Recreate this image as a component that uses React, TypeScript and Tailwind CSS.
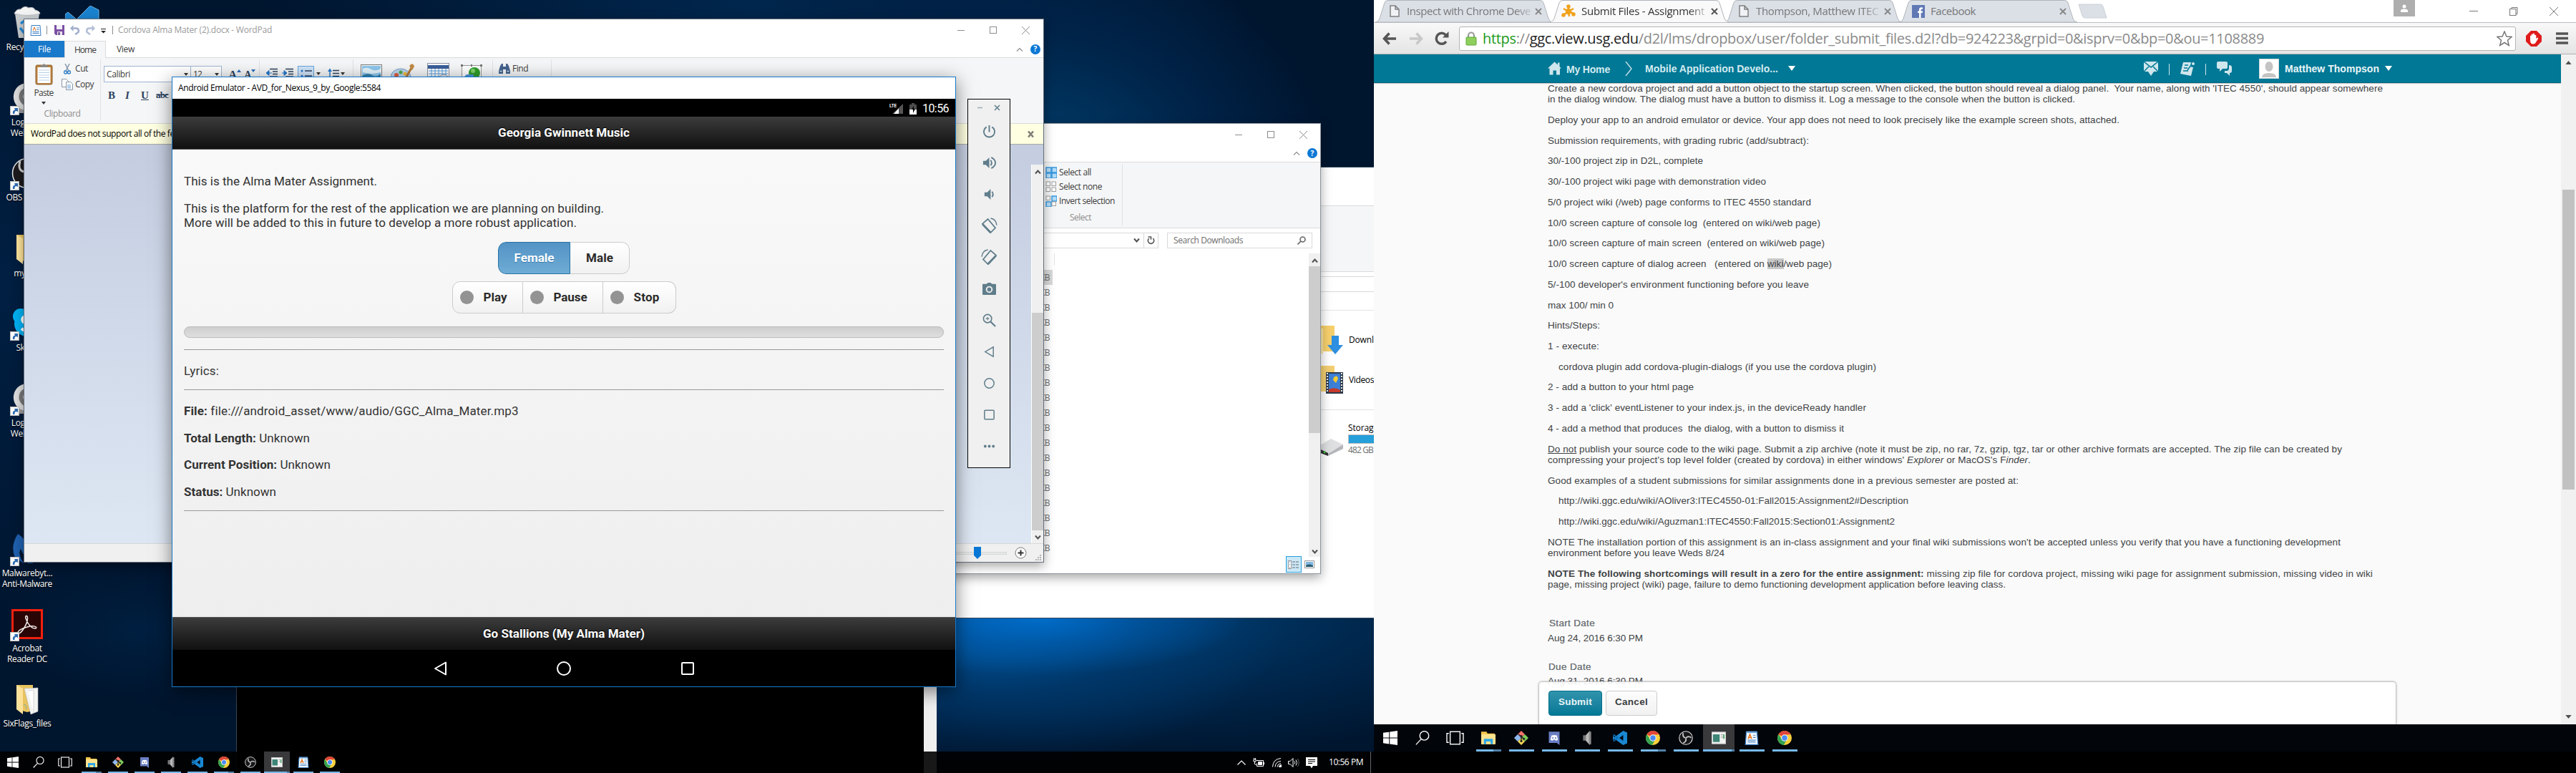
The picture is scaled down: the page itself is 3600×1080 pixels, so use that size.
import React, { useLayoutEffect, useRef, useState } from "react";

/* Text run whose tracking is adjusted so that it spans `w` pixels. */
function T({ w, className = "", children }: { w?: number; className?: string; children: React.ReactNode }) {
  const ref = useRef<HTMLSpanElement>(null);
  const [ls, setLs] = useState<number | undefined>(undefined);
  useLayoutEffect(() => {
    const el = ref.current;
    if (!el || !w) return;
    const natural = el.getBoundingClientRect().width;
    const n = (el.textContent || "").length;
    if (n > 0) setLs((w - natural) / n);
  }, [w]);
  return (
    <span ref={ref} className={`inline-block shrink-0 whitespace-pre ${className}`} style={ls === undefined ? undefined : { letterSpacing: `${ls}px` }}>
      {children}
    </span>
  );
}

/* ---------- Icons ---------- */
type P = { className?: string };

const Win = ({ className = "" }: P) => (
  <svg viewBox="0 0 16 16" className={className} fill="#fff">
    <path d="M0 2.2 6.6 1.3V7.6H0zM7.4 1.2 16 0V7.6H7.4zM0 8.4H6.6V14.7L0 13.8zM7.4 8.4H16V16L7.4 14.8z" />
  </svg>
);
const Search = ({ className = "" }: P) => (
  <svg viewBox="0 0 16 16" className={className} fill="none" stroke="#fff" strokeWidth="1.1">
    <circle cx="10" cy="5.5" r="5" />
    <path d="M6.5 9.3 0.7 15.5" />
  </svg>
);
const TaskView = ({ className = "" }: P) => (
  <svg viewBox="0 0 20 16" className={className} fill="none" stroke="#fff" strokeWidth="1.1">
    <rect x="4.5" y="1" width="11" height="14" />
    <path d="M3 3H.8v10H3M17 3h2.2v10H17" />
  </svg>
);
const FolderIc = ({ className = "" }: P) => (
  <svg viewBox="0 0 16 16" className={className}>
    <path d="M0 1h6l1 2h8v12H0z" fill="#f6c64d" />
    <path d="M0 4h16v11H0z" fill="#fde38e" />
    <path d="M3 9h10v6h-2.5v-3h-5v3H3z" fill="#2ea7e8" />
  </svg>
);
const GitIc = ({ className = "" }: P) => (
  <svg viewBox="0 0 16 16" className={className}>
    <path d="M8 0l4 4-4 4-4-4z" fill="#f2746b" />
    <path d="M4 4l4 4-4 4-4-4z" fill="#8fb8ef" />
    <path d="M12 4l4 4-4 4-4-4z" fill="#7fcf5a" />
    <path d="M8 8l4 4-4 4-4-4z" fill="#f5d857" />
    <path d="M5 4l6 5M8 5v7" stroke="#222" strokeWidth="1.1" />
    <circle cx="8" cy="6" r="1.3" fill="#222" /><circle cx="8" cy="11.5" r="1.3" fill="#222" /><circle cx="11" cy="9" r="1.2" fill="#222" />
  </svg>
);
const DiscordIc = ({ className = "" }: P) => (
  <svg viewBox="0 0 16 16" className={className}>
    <path d="M2 1h12v15l-3-2.5H2z" fill="#6a7fc4" />
    <path d="M5 5.2Q8 4.2 11 5.2L12.2 9.8Q11 11 9.8 11L9 10H7l-.8 1Q5 11 3.8 9.8z" fill="#fff" />
    <circle cx="6.4" cy="8" r=".9" fill="#6a7fc4" /><circle cx="9.6" cy="8" r=".9" fill="#6a7fc4" />
  </svg>
);
const SpeakerIc = ({ className = "" }: P) => (
  <svg viewBox="0 0 16 16" className={className}>
    <path d="M3.5 5h3v6h-3z" fill="#777" />
    <path d="M6.5 5 11 0v16L6.5 11z" fill="#b9b9b9" />
    <path d="M10 1h2.5v14H10z" fill="#8b8b8b" />
  </svg>
);
const VsIc = ({ className = "" }: P) => (
  <svg viewBox="0 0 16 16" className={className}>
    <path d="M11.5 0 16 2v12l-4.500 2L1.500 8.700 0 11V5l1.500 2.300z" fill="#1a87d2" />
    <path d="M0 4.500 1.500 4 11.500 12V4L1.500 12 0 11.500 4 8z" fill="#0d6fb8" />
    <path d="M7.500 8 11.500 5v6z" fill="#02060c" />
  </svg>
);
const ChromeIc = ({ className = "", blue = "#4a8af4" }: P & { blue?: string }) => (
  <svg viewBox="0 0 16 16" className={className}>
    <circle cx="8" cy="8" r="8" fill="#f7cf3c" />
    <path d="M8 8 1.100 4A8 8 0 0 1 14.900 4L8 4.500z" fill="#e0453a" />
    <path d="M1.100 4A8 8 0 0 0 7 15.940L10.500 10 5 9.500z" fill="#35a352" />
    <circle cx="8" cy="8" r="3.800" fill="#fff" /><circle cx="8" cy="8" r="3" fill={blue} />
  </svg>
);
const ObsIc = ({ className = "" }: P) => (
  <svg viewBox="0 0 16 16" className={className}>
    <circle cx="8" cy="8" r="7.400" fill="#17171a" stroke="#ddd" strokeWidth=".9" />
    <path d="M7.500 8Q4 7 5 2.500M8 8q3-3 6-.2M8 8.200q1 4-3 5.500" stroke="#c9c9c9" strokeWidth="1.400" fill="none" />
  </svg>
);
const EmuIc = ({ className = "" }: P) => (
  <svg viewBox="0 0 16 16" className={className}>
    <rect x=".4" y="1.500" width="15.200" height="13" fill="#f2f2f2" stroke="#cfcfcf" strokeWidth=".8" />
    <rect x="1.500" y="4" width="7.500" height="8.500" fill="#3d8577" />
    <path d="M10.500 4.500h2M10.500 7h2" stroke="#999" /><rect x="13" y="4" width="1.300" height="5" fill="#3c9b5a" />
  </svg>
);
const WordPadIc = ({ className = "" }: P) => (
  <svg viewBox="0 0 16 16" className={className}>
    <path d="M2 1.500h12l1 14H1z" fill="#f5faff" stroke="#3d7fc4" strokeWidth="1" />
    <path d="M2 .5h12v2H2z" fill="#69a3dc" />
    <path d="M4 9l2-5 2 5M4.700 7.500h2.600" stroke="#e8731a" strokeWidth="1.200" fill="none" />
    <path d="M9.500 5h3M9.500 7.500h3M3.500 10.500h9M3.500 12.500h9" stroke="#4b86c6" strokeWidth=".9" />
  </svg>
);

function Taskbar({ big }: { big?: boolean }) {
  const ic = big ? "w-5 h-5" : "w-4 h-4";
  const items = [FolderIc, GitIc, DiscordIc, SpeakerIc, VsIc, ChromeIc, ObsIc, EmuIc, WordPadIc, ChromeIc];
  return (
    <div className={`flex h-full ${big ? "w-[597px]" : "w-[480px]"}`}>
      <div className={`flex items-center justify-center ${big ? "w-[45px]" : "w-[36px]"}`}><Win className={ic} /></div>
      <div className={`flex items-center justify-center ${big ? "w-[45px]" : "w-[36px]"}`}><Search className={ic} /></div>
      <div className={`flex items-center justify-center ${big ? "w-[47px]" : "w-[37px]"}`}><TaskView className={big ? "w-[25px] h-5" : "w-5 h-4"} /></div>
      {items.map((Ic, i) => (
        <div key={i} className={`flex flex-col items-center ${big ? "w-[46px]" : "w-[37px]"}`}>
          <div className={`flex flex-1 items-center justify-center pt-[2px] ${i === 7 ? (big ? "w-[44px] bg-[#39393c]" : "w-[36px] bg-[#39393c]") : ""}`}>
            <Ic className={ic} />
          </div>
          <div className={`flex justify-end bg-[#76b9ed] ${big ? "h-[3px]" : "h-[2px]"} ${i === 7 ? (big ? "w-[44px]" : "w-[36px]") : big ? "w-[35px]" : "w-[28px]"}`}>
            {(i === 0 || i === 5 || i === 7) && <div className={`h-full bg-[#4f81a8] ${i === 7 ? "w-[4px]" : big ? "w-[11px]" : "w-[8px]"}`} />}
          </div>
        </div>
      ))}
    </div>
  );
}

const Shortcut = () => (
  <svg viewBox="0 0 13 13" className="absolute bottom-0 left-0 h-[13px] w-[13px]">
    <rect x=".5" y=".5" width="12" height="12" fill="#fff" stroke="#bbb" />
    <path d="M4 11Q3 6 7 5.500L6 3h5v5L9 7Q6 7 6.500 11z" fill="#2f6cb3" />
  </svg>
);

function DeskIcon({ className, lines, children, shortcut = true }: { className: string; lines: string[]; children: React.ReactNode; shortcut?: boolean }) {
  return (
    <div className={`absolute flex w-[76px] flex-col items-center font-['Open_Sans',sans-serif] text-[12px] leading-[15px] tracking-[-0.35px] text-white ${className}`}>
      <div className="relative mb-[2px] flex h-[48px] w-[48px] items-center justify-center">
        {children}
        {shortcut && <Shortcut />}
      </div>
      {lines.map((l) => <div key={l} className="whitespace-nowrap [text-shadow:0_1px_2px_#000]">{l}</div>)}
    </div>
  );
}

const Cam = () => (
  <svg viewBox="0 0 44 48" className="h-[46px] w-[44px]">
    <path d="M12 36h22l4 10H6z" fill="#999" /><circle cx="22" cy="22" r="20" fill="#dcdcdc" /><circle cx="24" cy="22" r="14" fill="#777" /><circle cx="25" cy="22" r="9" fill="#eee" /><circle cx="26" cy="22" r="7" fill="#1d5750" />
  </svg>
);

const FolderBig = () => (
  <svg viewBox="0 0 34 44" className="h-[44px] w-[34px]">
    <path d="M2 2h23v36l-8 2L2 36z" fill="#e8c25e" />
    <path d="M13 7 32 6v33l-10 4z" fill="#f3f3f1" stroke="#bbb" strokeWidth=".6" /><path d="M18 10l8-1v32" fill="#fff" stroke="#ccc" strokeWidth=".8" />
    <path d="M2 2 11 7v36L2 36z" fill="#fbe19a" />
    <path d="M12 30q4-2 4 6" stroke="#7aa" fill="none" />
  </svg>
);

/* Minimise / maximise / close glyphs */
const WinButtons = ({ className = "" }: P) => (
  <svg viewBox="0 0 104 14" className={`h-[14px] w-[104px] ${className}`} fill="none" stroke="#8c8c8c">
    <path d="M1 7.500h10M91 2l11 11M102 2 91 13" /><rect x="46.500" y="2.500" width="9" height="9" />
  </svg>
);
const HelpRow = ({ className = "" }: P) => (
  <div className={`flex items-center justify-end gap-[10px] ${className}`}>
    <svg viewBox="0 0 10 6" className="h-[6px] w-[10px]" fill="none" stroke="#8c8c8c" strokeWidth="1.200"><path d="M1 5.500 5 1.500l4 4" /></svg>
    <div className="flex h-[14px] w-[14px] items-center justify-center rounded-full bg-[#0a78d6] font-['Open_Sans',sans-serif] text-[10px] font-bold text-white">?</div>
  </div>
);
const Chev = ({ d, className = "" }: { d: string; className?: string }) => (
  <svg viewBox="0 0 9 8" className={`h-[8px] w-[9px] ${className}`} fill="none" stroke="#505050" strokeWidth="2"><path d={d} /></svg>
);
const UP = "M1 6.500 4.500 2.500 8 6.500";
const DOWN = "M1 1.500 4.500 5.500 8 1.500";

/* ---------- WordPad ---------- */
function WordPad() {
  return (
    <div className="absolute left-[33px] top-[26px] flex h-[760px] w-[1426px] flex-col border border-[#66707c] bg-white font-['Open_Sans',sans-serif] text-[12px] text-[#3c3c3c] shadow-[0_5px_14px_rgba(0,0,0,0.35)]">
      <div className="flex h-[30px] items-center">
        <svg viewBox="0 0 16 16" className="ml-[8px] h-[16px] w-[16px]">
          <path d="M2 1.500h12l1 14H1z" fill="#f5faff" stroke="#3d7fc4" /><path d="M4 9l2-5 2 5" stroke="#e8731a" fill="none" /><path d="M9.500 5h3M9.500 7.500h3M3.500 10.500h9M3.500 12.500h9" stroke="#4b86c6" />
        </svg>
        <div className="ml-[7px] h-[12px] w-px bg-[#8c8c8c]" />
        <svg viewBox="0 0 14 14" className="ml-[10px] h-[14px] w-[14px]"><path d="M0 0h14v14H2l-2-2z" fill="#7b4fa3" /><path d="M3 0h8v6H3z" fill="#f3eefa" /><path d="M4 9h7v5H4z" fill="#e6dff0" /><path d="M5.500 10h2v4h-2z" fill="#4b2c6c" /></svg>
        <svg viewBox="0 0 14 14" className="ml-[8px] h-[14px] w-[14px]" fill="none" stroke="#a3b0cc" strokeWidth="2.600"><path d="M3 4.500h5.500a3.500 3.500 0 0 1 1 6.800L7 13" /><path d="M0 4.500 4.500 0v9z" fill="#a3b0cc" stroke="none" /></svg>
        <svg viewBox="0 0 14 14" className="ml-[7px] h-[14px] w-[14px]" fill="none" stroke="#b4bfd6" strokeWidth="2.600"><path d="M11 4.500H5.500a3.500 3.500 0 0 0-1 6.800L7 13" /><path d="M14 4.500 9.500 0v9z" fill="#b4bfd6" stroke="none" /></svg>
        <svg viewBox="0 0 7 7" className="ml-[8px] mt-[3px] h-[7px] w-[7px]"><path d="M0 .5h7" stroke="#222" /><path d="M0 3h7L3.500 6.500z" fill="#222" /></svg>
        <div className="ml-[9px] h-[12px] w-px bg-[#8c8c8c]" />
        <T w={215} className="ml-[7px] text-[#9a9a9a]">Cordova Alma Mater (2).docx - WordPad</T>
        <WinButtons className="ml-auto mr-[17px]" />
      </div>
      <div className="flex h-[24px] items-stretch border-b border-[#dadbdc]">
        <div className="flex w-[56px] items-center justify-center bg-[#1979ca] text-white"><T w={18}>File</T></div>
        <div className="mb-[-1px] flex w-[58px] items-center justify-center border-x border-t border-[#dadbdc] bg-[#f5f6f7]"><T w={30}>Home</T></div>
        <div className="ml-[15px] flex items-center"><T w={25}>View</T></div>
        <HelpRow className="ml-auto mr-[4px]" />
      </div>
      <div className="flex h-[92px] border-b border-[#dadbdc] bg-[#f5f6f7] pt-[2px]">
        <div className="flex h-[86px] w-[107px] flex-col border-r border-[#e1e2e4]">
          <div className="flex h-[68px]">
            <div className="ml-[13px] flex w-[28px] flex-col items-center pt-[5px]">
              <svg viewBox="0 0 25 31" className="h-[31px] w-[25px]"><rect x="1" y="3" width="23" height="27" rx="2" fill="#b98140" stroke="#8f6130" /><rect x="3.500" y="6" width="18" height="22" fill="#fff" /><path d="M5 10h15M5 13.500h15M5 17h15M5 20.500h15M5 24h15" stroke="#b9cfe6" /><path d="M7 6 8 3h3q1.500-4 3 0h3l1 3z" fill="#888" /></svg>
              <T w={27} className="leading-[21px]">Paste</T>
              <svg viewBox="0 0 6 4" className="mt-[2px] h-[4px] w-[6px]"><path d="M0 0h6L3 4z" fill="#333" /></svg>
            </div>
            <div className="ml-[11px] flex flex-col">
              <div className="flex h-[22px] items-center pt-[4px]">
                <svg viewBox="0 0 10 15" className="ml-[3px] mr-[6px] h-[15px] w-[10px]" fill="none"><path d="M2 0l5 10M8 0 3 10" stroke="#8a98ab" strokeWidth="1.500" /><circle cx="2.500" cy="12" r="2" stroke="#2a7cc7" strokeWidth="1.400" /><circle cx="7.500" cy="12" r="2" stroke="#2a7cc7" strokeWidth="1.400" /></svg>
                <T w={18}>Cut</T>
              </div>
              <div className="flex h-[22px] items-center pt-[4px]">
                <svg viewBox="0 0 16 16" className="mr-[3px] h-[16px] w-[16px]" fill="#fff" stroke="#8795a6"><path d="M.5.500h6l3 3v8h-9z" /><path d="M6.500 4.500h6l3 3v8h-9z" /><path d="M8 9h5M8 11h5M8 13h5" stroke="#6ea3d8" /></svg>
                <T w={26}>Copy</T>
              </div>
            </div>
          </div>
          <div className="flex justify-center text-[#8d8d8d]"><T w={51} className="leading-[20px]">Clipboard</T></div>
        </div>
        <div className="flex h-[86px] w-[222px] flex-col border-r border-[#e1e2e4] pl-[4px] pt-[9px]">
          <div className="flex">
            <div className="flex h-[23px] w-[122px] items-center justify-between border border-[#9fb5d3] bg-white px-[3px]"><T w={33}>Calibri</T><svg viewBox="0 0 6 4" className="h-[4px] w-[6px]"><path d="M0 0h6L3 4z" fill="#333" /></svg></div>
            <div className="flex h-[23px] w-[43px] items-center justify-between border border-l-0 border-[#9fb5d3] bg-white px-[3px]"><T w={12}>12</T><svg viewBox="0 0 6 4" className="h-[4px] w-[6px]"><path d="M0 0h6L3 4z" fill="#333" /></svg></div>
            <div className="ml-[9px] flex items-end font-['Liberation_Serif',serif] text-[17px] font-bold leading-[20px] text-[#2d4361]">A<span className="mb-[14px] h-0 w-0 border-x-[3px] border-b-[4px] border-x-transparent border-b-[#2a6fc0]" /></div>
            <div className="ml-[4px] flex items-end font-['Liberation_Serif',serif] text-[14px] font-bold leading-[20px] text-[#2d4361]">A<span className="mb-[14px] h-0 w-0 border-x-[3px] border-t-[4px] border-x-transparent border-t-[#2a6fc0]" /></div>
          </div>
          <div className="mt-[6px] flex h-[24px] items-center pl-[6px] font-['Liberation_Serif',serif] text-[15px] font-bold text-[#2d4361]">
            <span className="w-[24px]">B</span><span className="w-[22px] italic">I</span><span className="w-[21px] underline">U</span><T w={17} className="text-[13px] line-through">abc</T>
          </div>
        </div>
        <div className="flex h-[86px] w-[131px] items-start gap-[6px] border-r border-[#e1e2e4] pl-[9px] pt-[9px]">
          {[0, 1].map((i) => (
            <svg key={i} viewBox="0 0 16 16" className="mt-[3px] h-[16px] w-[16px]" stroke="#2d4361" strokeWidth="1.500"><path d="M5 1.500h11M9 5h7M9 8.500h7M5 12h11" /><path d={i ? "M7 7 3 3.500v7zM0 7h5" : "M0 7l4-3.500v7zM3 7h5"} fill="#2378cc" stroke="#2378cc" strokeWidth="1" /></svg>
          ))}
          <div className="flex h-[24px] w-[23px] shrink-0 justify-center border border-[#6aa7e0] bg-[#cfe4f8] pt-[4px]"><svg viewBox="0 0 16 12" className="h-[12px] w-[16px]"><path d="M6 2h10M6 9h10" stroke="#2d4361" strokeWidth="1.500" /><circle cx="2" cy="2" r="1.500" fill="#2378cc" /><circle cx="2" cy="9" r="1.500" fill="#2378cc" /></svg></div>
          <svg viewBox="0 0 6 4" className="ml-[-3px] mt-[9px] h-[4px] w-[6px] shrink-0"><path d="M0 0h6L3 4z" fill="#333" /></svg>
          <svg viewBox="0 0 16 14" className="ml-[4px] mt-[3px] h-[14px] w-[16px] shrink-0"><path d="M7 3.500h9M7 7.500h9M7 11.500h9" stroke="#2d4361" strokeWidth="1.500" /><path d="M3 2v12" stroke="#2378cc" strokeWidth="1.500" /><path d="M0 5l3-4.500L6 5z" fill="#2378cc" /></svg>
          <svg viewBox="0 0 6 4" className="ml-[-4px] mt-[9px] h-[4px] w-[6px] shrink-0"><path d="M0 0h6L3 4z" fill="#333" /></svg>
        </div>
        <div className="flex h-[86px] w-[195px] items-start border-r border-[#e1e2e4] pl-[10px] pt-[7px]">
          <svg viewBox="0 0 30 26" className="h-[26px] w-[30px] shrink-0"><rect x=".5" y=".5" width="29" height="25" fill="#fff" stroke="#777" /><rect x="2" y="2" width="26" height="22" fill="#8fc7ee" /><path d="M2 16q8-5 14-1t12-2v11H2z" fill="#2e7fa8" /><path d="M3 6q6-3 12 1 6 3 13-1v5q-12 4-25 0z" fill="#e3f3fc" /></svg>
          <svg viewBox="0 0 34 30" className="ml-[12px] mt-[-2px] h-[30px] w-[34px] shrink-0"><ellipse cx="14" cy="20" rx="14" ry="12" fill="#b9d7f0" stroke="#7a9cc0" /><circle cx="8" cy="17" r="3" fill="#e35d3f" /><circle cx="14" cy="13" r="2.500" fill="#4fa84d" /><circle cx="20" cy="15" r="2.500" fill="#f3b83a" /><path d="M30 5 20 23" stroke="#b57a38" strokeWidth="3" /><path d="M26 4q5-6 7 1l-3 5z" fill="#c28b48" /></svg>
          <svg viewBox="0 0 31 26" className="ml-[17px] mt-[-2px] h-[26px] w-[31px] shrink-0"><rect x=".5" y=".5" width="30" height="26" fill="#fff" stroke="#8a94a5" /><path d="M1 3h29v5H1z" fill="#3b5f9a" /><path d="M2 11h27M2 15h27M2 19h27M2 23h27M6 8v18M11 8v18M16 8v18M21 8v18M26 8v18" stroke="#5a9fe0" /><circle cx="23" cy="23" r="7" fill="#dfe6ee" stroke="#8a94a5" /></svg>
          <svg viewBox="0 0 30 26" className="ml-[16px] h-[26px] w-[30px] shrink-0"><rect x="1.500" y="1.500" width="27" height="27" fill="#fff" stroke="#999" /><circle cx="19" cy="12" r="8" fill="#2f9e2b" /><circle cx="17" cy="9" r="3" fill="#7ed36c" /><path d="M4 18l4-4h10v14H4z" fill="#4c95dd" /><path d="M0 0h3v3H0zM27 0h3v3h-3zM14 0h2v3h-2z" fill="#777" /></svg>
        </div>
        <div className="flex h-[86px] w-[82px] items-start border-r border-[#e1e2e4] pl-[8px] pt-[4px]">
          <svg viewBox="0 0 16 14" className="mt-[2px] h-[14px] w-[16px]" fill="#46648f"><path d="M2 3 4 0h2v4h4V0h2l2 3 2 7v4h-6V8H6v6H0v-4z" /><path d="M1.500 10.500h3M11.500 10.500h3" stroke="#cfe0f5" strokeWidth="1.500" /></svg>
          <T w={22} className="ml-[3px]">Find</T>
        </div>
      </div>
      <div className="flex h-[29px] items-center border-b border-[#a9a9a0] bg-[#ffffe1] pl-[9px] text-black">
        <T w={403}>WordPad does not support all of the features of this document. Some content</T>
        <svg viewBox="0 0 9 9" className="ml-auto mr-[13px] h-[9px] w-[9px]" stroke="#808078" strokeWidth="2.600"><path d="M1 .5l7 8M8 .5l-7 8" /></svg>
      </div>
      <div className="flex min-h-0 flex-1 bg-gradient-to-b from-[#c4cde0] to-[#dde7f3]">
        <div className="ml-auto mt-[28px] flex w-[17px] flex-col items-center border-l border-white bg-[#f0f0f0] pt-[6px]">
          <Chev d={UP} />
          <div className="mt-[193px] h-[304px] w-[16px] bg-[#cdcdcd]" />
          <Chev d={DOWN} className="mt-[6px]" />
        </div>
      </div>
      <div className="flex h-[26px] items-center border-t border-[#d7d7d7] bg-[#f0f0f0]">
        <div className="ml-auto flex h-[4px] w-[100px] items-center border border-[#d6d6d6] bg-[#e7eaea] pl-[53px]"><svg viewBox="0 0 10 17" className="h-[17px] w-[10px] shrink-0"><path d="M0 0h10v12l-5 5-5-5z" fill="#0a78d6" /></svg></div>
        <svg viewBox="0 0 17 17" className="ml-[11px] h-[17px] w-[17px]" fill="#fff" stroke="#777"><circle cx="8.500" cy="8.500" r="7.500" /><path d="M4.500 8.500h8M8.500 4.500v8" stroke="#333" strokeWidth="2" /></svg>
        <svg viewBox="0 0 9 9" className="ml-[12px] mr-[2px] mt-[14px] h-[9px] w-[9px]" fill="#b5b5b5"><path d="M6 0h2v2H6zM3 3h2v2H3zM6 3h2v2H6zM0 6h2v2H0zM3 6h2v2H3zM6 6h2v2H6z" /></svg>
      </div>
    </div>
  );
}

/* ---------- File Explorer (Downloads) ---------- */
const Squares = ({ kind }: { kind: number }) => {
  const on = [[1, 1, 1, 1], [0, 0, 0, 0], [0, 1, 1, 0]][kind];
  return (
    <svg viewBox="0 0 16 16" className="h-[16px] w-[16px]">
      {on.map((o, i) => (
        <rect key={i} x={(i % 2) * 8 + 1} y={Math.floor(i / 2) * 8 + 1} width={o ? 7 : 5.500} height={o ? 7 : 5.500} fill={o ? "#b4dcf8" : "#fff"} stroke={o ? "#2d93dc" : "#a0a0a0"} strokeWidth={o ? 1.400 : 1} />
      ))}
    </svg>
  );
};

function Downloads() {
  return (
    <div className="absolute left-[1000px] top-[172px] flex h-[630px] w-[846px] flex-col border border-[#8d949c] bg-white font-['Open_Sans',sans-serif] text-[12px] text-[#3c3c3c] shadow-[0_5px_14px_rgba(0,0,0,0.35)]">
      <div className="flex h-[29px] items-center"><WinButtons className="ml-auto mr-[16px]" /></div>
      <div className="flex h-[25px] items-center border-b border-[#dadbdc]"><HelpRow className="ml-auto mr-[4px]" /></div>
      <div className="flex h-[92px] border-b border-[#dadbdc] bg-[#f5f6f7] pt-[2px]">
        <div className="flex h-[86px] w-[568px] flex-col border-r border-[#e1e2e4] pl-[460px] pt-[2px]">
          <div className="flex h-[22px] items-center gap-[3px]"><Squares kind={0} /><T w={45}>Select all</T></div>
          <div className="flex h-[22px] items-center gap-[3px]"><Squares kind={1} /><T w={60}>Select none</T></div>
          <div className="flex h-[22px] items-center gap-[3px]"><Squares kind={2} /><T w={78}>Invert selection</T></div>
          <div className="mt-[2px] flex h-[22px] shrink-0 items-center pl-[34px] text-[#8d8d8d]"><T w={30}>Select</T></div>
        </div>
      </div>
      <div className="mt-[6px] flex h-[22px]">
        <div className="flex w-[618px] items-center justify-end border border-[#d9d9d9]">
          <Chev d={DOWN} className="mr-[5px]" />
          <div className="flex h-full w-[20px] items-center justify-center border-l border-[#d9d9d9]"><svg viewBox="0 0 11 12" className="h-[12px] w-[11px]" fill="none" stroke="#555" strokeWidth="1.600"><path d="M8.300 3a4.200 4.200 0 1 1-5.600 0M1.500 1h4v3.800" /></svg></div>
        </div>
        <div className="ml-[12px] flex w-[203px] items-center justify-between border border-[#d9d9d9] pl-[8px] pr-[8px] text-[#6d6d6d]">
          <T w={97}>Search Downloads</T>
          <svg viewBox="0 0 12 12" className="h-[12px] w-[12px]" fill="none" stroke="#666" strokeWidth="1.600"><circle cx="7.500" cy="4.500" r="3.500" /><path d="M5 7 .5 11.500" /></svg>
        </div>
      </div>
      <div className="mt-[7px] flex min-h-0 flex-1">
        <div className="flex w-[473px] flex-col">
          <div className="h-[25px] border-r border-[#e5e5e5]" />
          <div className="flex flex-col pt-[6px]">
            {Array.from({ length: 19 }).map((_, i) => (
              <div key={i} className={`mr-[3px] flex h-[21.05px] items-center justify-end pr-[4px] text-[#6d6d6d] ${i === 0 ? "bg-[#d9d9d9]" : ""}`}><T w={14}>KB</T></div>
            ))}
          </div>
        </div>
        <div className="ml-auto flex h-[424px] w-[16px] flex-col items-center bg-[#f0f0f0] pt-[6px]">
          <Chev d={UP} />
          <div className="mt-[4px] h-[233px] w-[16px] bg-[#cdcdcd]" />
          <Chev d={DOWN} className="mb-[3px] mt-auto" />
        </div>
      </div>
      <div className="flex h-[24px] items-start justify-end">
        <div className="flex h-[23px] w-[22px] items-center justify-center border border-[#26a0da] bg-[#cbe8f6]"><svg viewBox="0 0 16 12" className="h-[12px] w-[16px]"><rect x=".5" y=".5" width="4" height="11" fill="#fff" stroke="#999" /><path d="M6 2h4M11 2h4M6 6h4M11 6h4M6 10h4M11 10h4" stroke="#667" strokeWidth="1.200" /><path d="M2 2h1M2 6h1" stroke="#37c" /><path d="M2 10h1" stroke="#c33" /></svg></div>
        <svg viewBox="0 0 14 11" className="ml-[4px] mr-[8px] mt-[6px] h-[11px] w-[14px]"><rect x=".5" y=".5" width="13" height="10" fill="#fff" stroke="#999" /><rect x="2" y="2" width="10" height="7" fill="#7fb6de" /><path d="M2 7q4-3 10 0v2H2z" fill="#295a70" /></svg>
      </div>
    </div>
  );
}

/* ---------- File Explorer (This PC) ---------- */
function ThisPC() {
  return (
    <div className="absolute left-[1300px] top-[233px] flex h-[631px] w-[620px] flex-col border-y border-[#33475c] bg-white font-['Open_Sans',sans-serif] text-[12px] text-black">
      <div className="h-[54px] border-b border-[#dadbdc]" />
      <div className="h-[92px] border-b border-[#dadbdc] bg-[#f5f6f7]" />
      <div className="mt-[6px] h-[22px] border-y border-[#d9d9d9]" />
      <div className="h-[26px] border-b border-[#e5e5e5]" />
      <div className="flex h-[82px] items-center pl-[537px]">
        <svg viewBox="0 0 44 40" className="h-[40px] w-[44px] shrink-0"><path d="M0 0h28v36H14L0 30z" fill="#f7d06c" /><path d="M0 4h12v36L0 34z" fill="#fce7a5" /><path d="M24 14h10v13h6L29 40 18 27h6z" fill="#2f8fe0" /></svg>
        <T w={61} className="ml-[4px]">Downloads</T>
      </div>
      <div className="mt-[-27px] flex h-[84px] items-center border-b border-[#e0e0e0] pl-[537px]">
        <svg viewBox="0 0 44 40" className="h-[40px] w-[44px] shrink-0"><path d="M0 0h28v36H0z" fill="#f3cf72" /><rect x="16" y="9" width="24" height="30" fill="#2c3b4a" /><rect x="20" y="11" width="16" height="26" fill="#3d7fd6" /><path d="M27 16q5-4 6 2l-3 6-4-4z" fill="#f2cb32" /><path d="M20 33q8-4 16 1v3H20z" fill="#c63a2c" /><path d="M18 10v28M38 10v28" stroke="#e8e8e8" strokeWidth="2" strokeDasharray="2 2" /></svg>
        <T w={35} className="ml-[4px]">Videos</T>
      </div>
      <div className="flex pl-[540px] pt-[16px]">
        <svg viewBox="0 0 38 24" className="mt-[24px] h-[24px] w-[38px] shrink-0"><path d="M0 12 20 0l17 8-21 13z" fill="#dedfe1" /><path d="M16 21 37 8v6L16 24z" fill="#b4b6ba" /><path d="M0 12l16 8v4L0 18z" fill="#333" /><circle cx="11" cy="19" r="1.400" fill="#3c3" /></svg>
        <div className="ml-[6px] flex w-[120px] shrink-0 flex-col items-start">
          <T w={42} className="leading-[18px]">Storage</T>
          <div className="h-[13px] w-[120px] border border-[#bcbcbc] bg-[#26a0da]" />
          <T w={35} className="leading-[18px] text-[#6d6d6d]">482 GB</T>
        </div>
      </div>
    </div>
  );
}

/* ---------- Android emulator ---------- */
const Bar = "flex h-[46px] shrink-0 items-center justify-center bg-gradient-to-b from-[#3c3c3c] to-[#111] text-[17px] font-bold text-white [text-shadow:0_-1px_1px_#000]";
const Btn = ({ icon, children, className }: { icon?: boolean; children: React.ReactNode; className: string }) => (
  <div className={`flex h-full items-center border-[#ccc] bg-gradient-to-b from-white to-[#f1f1f1] font-bold text-[#2b2b2b] ${className}`}>
    {icon && <span className="ml-[10px] mr-[14px] h-[19px] w-[19px] shrink-0 rounded-full bg-[#939393]" />}
    {children}
  </div>
);
const Hr = ({ className = "" }: P) => <div className={`h-px shrink-0 bg-[#999] ${className}`} />;

function Emulator() {
  return (
    <div className="absolute left-[240px] top-[107px] flex h-[853px] w-[1096px] flex-col border border-[#1979ca] bg-white font-[Roboto,sans-serif] text-[17px] text-[#333] shadow-[0_6px_24px_rgba(0,0,0,0.5)]">
      <div className="flex h-[30px] shrink-0 items-center pl-[8px] font-['Open_Sans',sans-serif] text-[12px] text-black"><T w={283}>Android Emulator - AVD_for_Nexus_9_by_Google:5584</T></div>
      <div className="flex h-[25px] shrink-0 items-center justify-end bg-black pr-[9px] pt-[2px] text-white">
        <svg viewBox="0 0 20 17" className="h-[17px] w-[20px]"><path d="M19 2v14H4z" fill="#555" /><path d="M13 8.500V16H6z" fill="#fff" /><text x="0" y="7" fontSize="8" fontWeight="bold" fill="#fff" fontFamily="Roboto" textLength="10" lengthAdjust="spacingAndGlyphs">LTE</text></svg>
        <svg viewBox="0 0 10 16" className="ml-[8px] mr-[8px] h-[16px] w-[10px]"><path d="M3 0h4v2h3v14H0V2h3z" fill="#4d4d4d" /><path d="M0 9h10v7H0z" fill="#fff" /><path d="M6 4 3 9h2v5l3-6H6z" fill="#000" /></svg>
        <T w={37} className="text-[16px]">10:56</T>
      </div>
      <div className={`${Bar} border-b border-[#555]`}><T w={184}>Georgia Gwinnett Music</T></div>
      <div className="flex min-h-0 flex-1 flex-col bg-gradient-to-b from-[#f9f9f9] to-[#eee] px-[16px] leading-[20.5px] text-[#333] [text-shadow:0_1px_0_#f3f3f3]">
        <T w={270} className="mt-[34px] self-start">This is the Alma Mater Assignment.</T>
        <T w={587} className="mt-[17px] self-start">This is the platform for the rest of the application we are planning on building.</T>
        <T w={549} className="self-start">More will be added to this in future to develop a more robust application.</T>
        <div className="mt-[16px] flex h-[45px] self-center overflow-hidden rounded-[11px]">
          <div className="flex h-full w-[101px] items-center justify-center rounded-l-[11px] border border-[#2373a5] bg-gradient-to-b from-[#5393c5] to-[#6facd5] font-bold text-white [text-shadow:0_1px_0_#3373a5]"><T w={56}>Female</T></div>
          <Btn className="w-[83px] justify-center rounded-r-[11px] border border-l-0"><T w={38}>Male</T></Btn>
        </div>
        <div className="mt-[10px] flex h-[45px] self-center">
          <Btn icon className="w-[99px] rounded-l-[11px] border"><T w={33}>Play</T></Btn>
          <Btn icon className="w-[112px] border-y border-r"><T w={47}>Pause</T></Btn>
          <Btn icon className="w-[102px] rounded-r-[11px] border border-l-0"><T w={36}>Stop</T></Btn>
        </div>
        <div className="mt-[18px] h-[16px] shrink-0 rounded-full border border-[#bbb] bg-gradient-to-b from-[#cecece] to-[#dfdfdf]" />
        <Hr className="mt-[16px]" />
        <T w={49} className="mt-[19px] self-start">Lyrics:</T>
        <Hr className="mt-[16px]" />
        <T w={467} className="mt-[19px] self-start"><b>File:</b> file:///android_asset/www/audio/GGC_Alma_Mater.mp3</T>
        <T w={176} className="mt-[17px] self-start"><b>Total Length:</b> Unknown</T>
        <T w={205} className="mt-[17px] self-start"><b>Current Position:</b> Unknown</T>
        <T w={129} className="mt-[17px] self-start"><b>Status:</b> Unknown</T>
        <Hr className="mt-[16px]" />
      </div>
      <div className={`${Bar} border-t border-[#555]`}><T w={226}>Go Stallions (My Alma Mater)</T></div>
      <div className="flex h-[51px] shrink-0 items-center justify-center gap-[153px] bg-black">
        <svg viewBox="0 0 20 20" className="h-[20px] w-[20px]" fill="none" stroke="#fff" strokeWidth="2" strokeLinejoin="round"><path d="M18 1.500v17L3 10z" /></svg>
        <svg viewBox="0 0 20 20" className="h-[20px] w-[20px]" fill="none" stroke="#fff" strokeWidth="2"><circle cx="10" cy="10" r="9" /></svg>
        <svg viewBox="0 0 20 20" className="h-[20px] w-[20px]" fill="none" stroke="#fff" strokeWidth="2"><rect x="2" y="2" width="16" height="16" rx="1" /></svg>
      </div>
    </div>
  );
}

const toolIcons: React.ReactNode[] = [
  <g fill="none" stroke="#607d8b" strokeWidth="2"><path d="M6 3.500a8 8 0 1 0 8 0M10 1v10" /></g>,
  <g><path d="M1 7h4l5-5v16l-5-5H1z" fill="#607d8b" /><path d="M12 6q3 4 0 8M13 2q6 3 6 8t-6 8" fill="none" stroke="#607d8b" strokeWidth="2" /></g>,
  <g><path d="M3 7h4l5-5v16l-5-5H3z" fill="#607d8b" /><path d="M14 6q3 4 0 8" fill="none" stroke="#607d8b" strokeWidth="2" /></g>,
  <g fill="none" stroke="#607d8b"><path d="M0 7 8 0l11 13-7 7z" strokeWidth="1.800" /><path d="M12-1q8 1 9 10" strokeWidth="1.500" /><path d="M0 7.500 12 20" strokeWidth="3" /></g>,
  <g fill="none" stroke="#607d8b"><path d="M20 7 12 0 1 13l7 7z" strokeWidth="1.800" /><path d="M8-1Q0 0-1 9" strokeWidth="1.500" /><path d="M20 7.500 8 20" strokeWidth="3" /></g>,
  <g fill="#607d8b"><path d="M1 3h5l2-2h4l2 2h5q1 0 1 1v14q0 1-1 1H1q-1 0-1-1V4q0-1 1-1z" /><circle cx="10" cy="11" r="4" fill="none" stroke="#f0f0f0" strokeWidth="2" /></g>,
  <g fill="none" stroke="#607d8b" strokeWidth="1.700"><circle cx="7.500" cy="7.500" r="6" /><path d="M12 12l7 7" strokeWidth="2.300" /><path d="M5 7.500h5M7.500 5v5" strokeWidth="1.200" /></g>,
  <path d="M16 3v14L4 10z" fill="none" stroke="#607d8b" strokeWidth="1.500" />,
  <circle cx="10" cy="10" r="7" fill="none" stroke="#607d8b" strokeWidth="1.600" />,
  <rect x="3" y="3.500" width="14" height="13" rx="1" fill="none" stroke="#607d8b" strokeWidth="1.600" />,
  <g fill="#607d8b"><circle cx="4" cy="10" r="2" /><circle cx="10" cy="10" r="2" /><circle cx="16" cy="10" r="2" /></g>,
];

function EmuTools() {
  return (
    <div className="absolute left-[1352px] top-[138px] flex h-[516px] w-[60px] flex-col items-center border border-black bg-[#f0f0f0]">
      <svg viewBox="0 0 32 9" className="mt-[7px] h-[9px] w-[32px] shrink-0" stroke="#607d8b" strokeWidth="1.500"><path d="M0 4.500h7" opacity=".6" /><path d="M24 1l7 7M31 1l-7 7" /></svg>
      {toolIcons.map((ic, i) => (
        <div key={i} className="flex h-[44px] shrink-0 items-center justify-center pt-[12px]">
          <svg viewBox="0 0 20 20" className="h-[19px] w-[19px] overflow-visible">{ic}</svg>
        </div>
      ))}
    </div>
  );
}

/* ---------- Left monitor ---------- */
function Desktop() {
  return (
    <div className="relative h-[1080px] w-[1920px] shrink-0 overflow-hidden bg-[#00152e] bg-[radial-gradient(ellipse_290px_80px_at_1450px_864px,#006cc8_0%,rgba(0,96,180,0.65)_45%,transparent_100%),radial-gradient(ellipse_420px_200px_at_1380px_870px,rgba(0,90,165,0.95)_0%,rgba(0,62,118,0.7)_50%,transparent_100%),radial-gradient(ellipse_560px_200px_at_1640px_860px,rgba(0,66,122,0.8)_0%,transparent_100%),radial-gradient(ellipse_420px_330px_at_1440px_240px,#00406e_0%,#002348_60%,transparent_100%),radial-gradient(ellipse_700px_300px_at_1050px_0px,#00264d_0%,transparent_100%),radial-gradient(ellipse_300px_500px_at_0px_400px,#001f42_0%,transparent_100%),radial-gradient(ellipse_200px_100px_at_200px_880px,#001f40_0%,transparent_100%)]">
      <DeskIcon className="left-0 top-[8px]" lines={["Recycle Bin"]} shortcut={false}>
        <svg viewBox="0 0 38 46" className="h-[46px] w-[38px]"><path d="M2 10h34l-5 34H7z" fill="#c9cdd0" /><path d="M1 10q3-7 9-6 5-6 11-2 7-2 9 3 6 1 7 5-18 5-36 0z" fill="#f3f3f3" stroke="#b9bdc0" /><path d="M10 24l5-4 4 5M9 30l5 6 6-3" stroke="#2189d8" strokeWidth="3.500" fill="none" /></svg>
      </DeskIcon>
      <svg viewBox="0 0 48 48" className="absolute left-[91px] top-[8px] h-[48px] w-[48px]"><path d="M35 0l12 6v36l-12 6L0 19v-7l4-3 12 10z" fill="#1a82cf" stroke="#6fb4e6" strokeWidth="1" /></svg>
      <DeskIcon className="left-0 top-[113px]" lines={["Logitech", "Webcam"]}><Cam /></DeskIcon>
      <DeskIcon className="left-0 top-[218px]" lines={["OBS Studio"]}>
        <svg viewBox="0 0 44 44" className="h-[44px] w-[44px]"><circle cx="22" cy="22" r="20.500" fill="#1d1a1d" stroke="#e5e5e5" strokeWidth="1.500" /><path d="M20 20Q8 20 12 5" stroke="#ccc" strokeWidth="3" fill="none" /></svg>
      </DeskIcon>
      <DeskIcon className="left-0 top-[324px]" lines={["myApp"]} shortcut={false}><FolderBig /></DeskIcon>
      <DeskIcon className="left-0 top-[428px]" lines={["Skype"]}>
        <svg viewBox="0 0 44 44" className="h-[44px] w-[44px]"><circle cx="22" cy="22" r="18" fill="#00aff0" /><circle cx="13" cy="12" r="11" fill="#00aff0" /><circle cx="31" cy="32" r="11" fill="#00aff0" /><path d="M30 14q-8-6-14 0-3 6 6 8 10 2 7 8-7 6-15-1" stroke="#fff" strokeWidth="4" fill="none" /></svg>
      </DeskIcon>
      <DeskIcon className="left-0 top-[533px]" lines={["Logitech", "Webcam"]}><Cam /></DeskIcon>
      <DeskIcon className="left-0 top-[743px]" lines={["Malwarebyt...", "Anti-Malware"]}>
        <svg viewBox="0 0 44 44" className="h-[44px] w-[44px]"><path d="M9 1Q-2 18 5 34l12 8Q8 28 13 22l10 20h7L24 20Q18 6 9 1z" fill="#1f5fae" /></svg>
      </DeskIcon>
      <DeskIcon className="left-0 top-[848px]" lines={["Acrobat", "Reader DC"]}>
        <svg viewBox="0 0 44 42" className="h-[42px] w-[44px]"><rect x="1.500" y="1.500" width="41" height="39" fill="#2a0505" stroke="#f11f0d" strokeWidth="3" /><path d="M10 34c4 0 13-14 12.500-22 0-4-4-3-2.500 1 3 9 9 15 14 14 3-2-3-5-12-2-8 2-15 6-12 9z" fill="none" stroke="#f2ecec" strokeWidth="1.500" /></svg>
      </DeskIcon>
      <DeskIcon className="left-0 top-[953px]" lines={["SixFlags_files"]} shortcut={false}><FolderBig /></DeskIcon>

      {/* console window behind the emulator */}
      <div className="absolute left-[330px] top-[900px] flex h-[180px] w-[979px] justify-end border-l border-[#3b4654] bg-black"><div className="h-full w-[18px] bg-[#f0f0f0]" /></div>
      <ThisPC />
      <Downloads />
      <WordPad />
      <Emulator />
      <EmuTools />

      <div className="absolute bottom-0 left-0 flex h-[30px] w-full items-center bg-black/90 font-['Open_Sans',sans-serif] text-[12px] text-white">
        <Taskbar />
        <div className="ml-auto flex h-full items-center">
          <svg viewBox="0 0 12 7" className="h-[7px] w-[12px]" fill="none" stroke="#fff" strokeWidth="1.200"><path d="M.5 6.500 6 1l5.500 5.500" /></svg>
          <svg viewBox="0 0 16 13" className="ml-[10px] h-[13px] w-[16px]" fill="none" stroke="#fff"><path d="M5 3.500h9.500v8H5.500v-4" /><path d="M7.500 5.500h5v4h-5z" fill="#fff" /><path d="M14.500 6h1v3h-1" /><path d="M1 2h3v3H1zM1.500 0v2M3.500 0v2M2.500 5v3q0 1.500 2 1.500" /></svg>
          <svg viewBox="0 0 13 13" className="ml-[11px] h-[13px] w-[13px]" fill="none" stroke="#fff"><path d="M.5 12.500Q1 1.500 12 .500M4 12.500Q4.500 5 12 4.500M7 12.500q.5-4.500 5-5" /><path d="M9.500 12.500q0-2.500 3-3v3z" fill="#fff" /></svg>
          <svg viewBox="0 0 16 13" className="ml-[9px] h-[13px] w-[16px]" fill="none" stroke="#fff"><path d="M.5 4.500h2.500l4-4v12l-4-4H.500zM9 4.500q1.500 2 0 4M11 2.500q3 4 0 8" /><path d="M13.500 1q3.500 5.500 0 11" opacity=".4" /></svg>
          <svg viewBox="0 0 16 16" className="ml-[9px] mt-[2px] h-[16px] w-[16px]"><path d="M0 0h16v12h-6l-2 3.500L6 12H0z" fill="#fff" /><path d="M3 3.500h10M3 6h10M3 8.500h6" stroke="#000" /></svg>
          <T w={48} className="ml-[16px]">10:56 PM</T>
          <div className="ml-[10px] mr-[4px] h-full w-px bg-[#666]" />
        </div>
      </div>
    </div>
  );
}

/* ---------- Chrome ---------- */
function Tab({ active, fade, w, title, tw, icon, className = "" }: { active?: boolean; fade?: boolean; w: string; title: string; tw: number; icon: React.ReactNode; className?: string }) {
  return (
    <div className={`relative flex h-[31px] items-center ${w} ${active ? "z-10" : ""} ${className}`}>
      <svg viewBox="0 0 250 31" preserveAspectRatio="none" className="absolute inset-0 h-full w-full"><path d="M0 31Q4 31 6 26L13 4Q14 .5 18 .5H232Q236 .5 237 4L244 26Q246 31 250 31z" fill={active ? "#f9f9f9" : "#dbe0e7"} stroke="#b0b4ba" />{active && <path d="M2 31H248" stroke="#f9f9f9" strokeWidth="2" />}</svg>
      <div className="relative flex w-full items-center pl-[20px] pr-[15px]">
        <div className="flex w-[24px] items-center">{icon}</div>
        <T w={tw} className={`text-[15px] ${active ? "text-[#333]" : "text-[#777]"} ${fade ? "[mask-image:linear-gradient(to_right,#000_88%,rgba(0,0,0,0.25))]" : ""}`}>{title}</T>
        <svg viewBox="0 0 10 10" className="ml-auto h-[10px] w-[10px]" stroke={active ? "#555" : "#888"} strokeWidth="2"><path d="M1 1l8 8M9 1 1 9" /></svg>
      </div>
    </div>
  );
}
const PageIc = () => <svg viewBox="0 0 14 17" className="h-[17px] w-[14px]" fill="#f0f2f5" stroke="#808080" strokeWidth="1.500"><path d="M1 1h7l5 5v10H1zM8 1v5h5" /></svg>;

type Para = { indent?: boolean; lines: [number, React.ReactNode][] };
const paras: Para[] = [
  { lines: [[1167, "Create a new cordova project and add a button object to the startup screen. When clicked, the button should reveal a dialog panel.  Your name, along with 'ITEC 4550', should appear somewhere"], [737, "in the dialog window. The dialog must have a button to dismiss it. Log a message to the console when the button is clicked."]] },
  { lines: [[799, "Deploy your app to an android emulator or device. Your app does not need to look precisely like the example screen shots, attached."]] },
  { lines: [[365, "Submission requirements, with grading rubric (add/subtract):"]] },
  { lines: [[217, "30/-100 project zip in D2L, complete"]] },
  { lines: [[305, "30/-100 project wiki page with demonstration video"]] },
  { lines: [[368, "5/0 project wiki (/web) page conforms to ITEC 4550 standard"]] },
  { lines: [[381, "10/0 screen capture of console log  (entered on wiki/web page)"]] },
  { lines: [[387, "10/0 screen capture of main screen  (entered on wiki/web page)"]] },
  { lines: [[397, <>10/0 screen capture of dialog acreen   (entered on <span className="bg-[#c8c8c8]">wiki</span>/web page)</>]] },
  { lines: [[365, "5/-100 developer's environment functioning before you leave"]] },
  { lines: [[92, "max 100/ min 0"]] },
  { lines: [[73, "Hints/Steps:"]] },
  { lines: [[72, "1 - execute:"]] },
  { indent: true, lines: [[444, "cordova plugin add cordova-plugin-dialogs (if you use the cordova plugin)"]] },
  { lines: [[204, "2 - add a button to your html page"]] },
  { lines: [[445, "3 - add a 'click' eventListener to your index.js, in the deviceReady handler"]] },
  { lines: [[414, "4 - add a method that produces  the dialog, with a button to dismiss it"]] },
  { lines: [[1110, <><u>Do not</u> publish your source code to the wiki page. Submit a zip archive (note it must be zip, no rar, 7z, gzip, tgz, tar or other archive formats are accepted. The zip file can be created by</>], [675, <>compressing your project's top level folder (created by cordova) in either windows' <i>Explorer</i> or MacOS's F<i>inder</i>.</>]] },
  { lines: [[658, "Good examples of a student submissions for similar assignments done in a previous semester are posted at:"]] },
  { indent: true, lines: [[489, "http://wiki.ggc.edu/wiki/AOliver3:ITEC4550-01:Fall2015:Assignment2#Description"]] },
  { indent: true, lines: [[470, "http://wiki.ggc.edu/wiki/Aguzman1:ITEC4550:Fall2015:Section01:Assignment2"]] },
  { lines: [[1108, "NOTE The installation portion of this assignment is an in-class assignment and your final wiki submissions won't be accepted unless you verify that you have a functioning development"], [247, "environment before you leave Weds 8/24"]] },
  { lines: [[1153, <><b>NOTE The following shortcomings will result in a zero for the entire assignment:</b> missing zip file for cordova project, missing wiki page for assignment submission, missing video in wiki</>], [640, "page, missing project (wiki) page, failure to demo functioning development application before leaving class."]] },
];

function Chrome() {
  return (
    <div className="flex h-[1012px] w-[1680px] flex-col overflow-hidden bg-white font-['Open_Sans',sans-serif]">
      <div className="flex h-[31px] shrink-0 pl-[2px]">
        <Tab fade w="w-[248px]" title="Inspect with Chrome Deve" tw={173} icon={<PageIc />} />
        <Tab active fade w="w-[250px]" className="-ml-[4px]" title="Submit Files - Assignment" tw={172} icon={<svg viewBox="0 0 20 20" className="-ml-[4px] h-[20px] w-[20px]" stroke="#f0a21c" strokeWidth="2.500" fill="#f0a21c"><path d="M10 10 10 3M10 10 3 6M10 10 3 15M10 10 11 17M10 10 17 13M10 10 17 6" /><circle cx="10" cy="10" r="3" /><circle cx="10" cy="3" r="1.500" /><circle cx="3" cy="15" r="1.500" /><circle cx="17" cy="14" r="1.500" /></svg>} />
        <Tab fade w="w-[248px]" className="-ml-[6px]" title="Thompson, Matthew ITEC" tw={171} icon={<PageIc />} />
        <Tab w="w-[249px]" className="-ml-[4px]" title="Facebook" tw={63} icon={<svg viewBox="0 0 18 18" className="-ml-[2px] h-[18px] w-[18px]"><rect width="18" height="18" fill="#6079b5" /><path d="M12.500 18v-7h2.200l.3-2.500h-2.500V7q0-1.300 1.300-1.300H15V3.500q-5-1-5 3v2H8V11h2v7z" fill="#fff" /></svg>} />
        <svg viewBox="0 0 42 22" className="mt-[5px] h-[22px] w-[42px]"><path d="M2 1h30q3 0 4 3l5 16H11q-3 0-4-3z" fill="#dbe0e7" stroke="#ccd0d6" /></svg>
        <div className="ml-auto flex h-[23px] w-[30px] items-center justify-center bg-[#aeaeae]"><svg viewBox="0 0 10 12" className="h-[12px] w-[10px]" fill="#fff"><circle cx="5" cy="3" r="2.500" /><path d="M0 11V9q0-2.500 5-2.500T10 9v2z" /></svg></div>
        <svg viewBox="0 0 126 14" className="ml-[75px] mr-[24px] mt-[9px] h-[14px] w-[126px]" fill="none" stroke="#777"><path d="M1 6.500h12M113 1l12 12M125 1l-12 12M60 3V1.500h8v9h-2" /><rect x="57.500" y="3.500" width="8.500" height="9" /></svg>
      </div>
      <div className="flex h-[45px] shrink-0 items-center border-b border-t border-b-[#b0b0b0] border-t-[#b8bcc2] bg-gradient-to-b from-[#f9f9f9] to-[#e4e4e4]">
        <svg viewBox="0 0 20 18" className="ml-[12px] h-[18px] w-[20px]" fill="none" stroke="#555" strokeWidth="3.500"><path d="M19 9H3M9.500 1.500 2.500 9l7 7.500" /></svg>
        <svg viewBox="0 0 20 18" className="ml-[17px] h-[18px] w-[20px]" fill="none" stroke="#c8c8c8" strokeWidth="3.500"><path d="M1 9h16M10.500 1.500l7 7.500-7 7.500" /></svg>
        <svg viewBox="0 0 20 20" className="ml-[16px] h-[20px] w-[20px]" fill="none" stroke="#555" strokeWidth="3.500"><path d="M16 14a7.500 7.500 0 1 1-.5-9" /><path d="M19.500 0v8.500H11z" fill="#555" stroke="none" /></svg>
        <div className="ml-[14px] flex h-[34px] w-[1477px] items-center rounded-[3px] border border-[#b5b5b5] bg-white text-[20px] leading-[30px]">
          <svg viewBox="0 0 16 20" className="ml-[8px] h-[20px] w-[16px]"><path d="M4 9V5.500a4 4 0 0 1 8 0V9" fill="none" stroke="#9a9a9a" strokeWidth="2.200" /><rect x="1" y="8" width="14" height="11" rx="1" fill="#8fd05c" stroke="#5da83a" /></svg>
          <T w={1092} className="ml-[8px] text-[#8a8a8a]"><span className="text-[#1a9a1a]">https</span>://<span className="text-[#222]">ggc.view.usg.edu</span>/d2l/lms/dropbox/user/folder_submit_files.d2l?db=924223&amp;grpid=0&amp;isprv=0&amp;bp=0&amp;ou=1108889</T>
          <svg viewBox="0 0 22 22" className="ml-auto mr-[4px] h-[22px] w-[22px]" fill="#fff" stroke="#777" strokeWidth="1.500"><path d="M11 1l2.900 7 7.100.500-5.500 4.700 1.800 7.300L11 16.500l-6.300 4 1.800-7.300L1 8.500 8.100 8z" /></svg>
        </div>
        <svg viewBox="0 0 22 22" className="ml-[14px] h-[22px] w-[22px]"><path d="M7 0h8l7 7v8l-7 7H7l-7-7V7z" fill="#e01b1b" /><path d="M6 13V7q1.500-1 1.700.5V5q1.500-1.200 2.200 0V4q1.500-1 2.200.5v1.500q2-1 2.200.7V11l2-1.500q1.500.5.500 2L14 16q-1 2.500-4 2.500-4 0-4-5.500z" fill="#fff" /></svg>
        <svg viewBox="0 0 17 17" className="ml-[20px] h-[17px] w-[17px]" stroke="#555" strokeWidth="3.500"><path d="M0 2h17M0 8.500h17M0 15h17" /></svg>
      </div>
      <div className="flex min-h-0 flex-1">
        <div className="relative flex w-[1659px] flex-col overflow-hidden bg-[#fafafa] font-['Liberation_Sans',sans-serif]">
          <div className="relative z-10 flex h-[40px] shrink-0 items-center border-b border-[#006580] bg-[#007896] text-[14px] font-bold text-[#d4ebf0] shadow-[0_1px_1px_rgba(0,0,0,0.2)]">
            <svg viewBox="0 0 19 18" className="ml-[243px] h-[19px] w-[19px]" fill="#cfe6ec"><path d="M9.500 0 14 4V1h2.500v5.500L19 9h-2v9h-5v-6H7.500v6H2.500V9H0z" /></svg>
            <T w={61} className="ml-[7px] mt-[3px]">My Home</T>
            <svg viewBox="0 0 10 20" className="ml-[21px] h-[20px] w-[10px]" fill="none" stroke="#bfdde5" strokeWidth="1.500"><path d="M1 0l8 10-8 10" /></svg>
            <T w={186} className="ml-[18px] mt-[1px]">Mobile Application Develo...</T>
            <svg viewBox="0 0 10 7" className="ml-[14px] h-[7px] w-[10px]"><path d="M0 0h10L5 7z" fill="#fff" /></svg>
            <svg viewBox="0 0 20 20" className="ml-[487px] h-[20px] w-[20px]"><path d="M0 0h20v14h-6l-4 6-4-6H0z" fill="#cfe6ec" /><path d="M0 0l10 8L20 0M0 14l7-7M20 14l-7-7" stroke="#007896" strokeWidth="1.500" fill="none" /></svg>
            <div className="ml-[15px] mt-[3px] h-[16px] w-px bg-[#cfe6ec]" />
            <svg viewBox="0 0 20 20" className="ml-[15px] h-[20px] w-[20px]"><path d="M4 1h11l-1 6 4 1-3 12-15-3z" fill="#cfe6ec" /><path d="M6 5h5M5 9h5M4 13h7M10 12l8-11" stroke="#007896" strokeWidth="1.500" /><circle cx="18" cy="3" r="2" fill="#cfe6ec" /></svg>
            <div className="ml-[15px] mt-[3px] h-[16px] w-px bg-[#cfe6ec]" />
            <svg viewBox="0 0 21 20" className="ml-[15px] h-[20px] w-[21px]" fill="#cfe6ec"><path d="M2 0h11q2 0 2 2v6q0 2-2 2H8l-4 4v-4H2q-2 0-2-2V2q0-2 2-2z" /><path d="M17 5q4 0 4 3v5q0 3-3 3v4l-4-4h-3v-3h3q3 0 3-4z" /></svg>
            <div className="ml-[38px] flex h-[28px] w-[28px] items-end justify-center border border-[#cfd8da] bg-white"><svg viewBox="0 0 22 24" className="h-[24px] w-[22px]" fill="#c4c4c4"><ellipse cx="11" cy="8" rx="5.500" ry="7" /><path d="M1 23q0-6 10-6t10 6z" /></svg></div>
            <T w={132} className="ml-[8px] mt-[1px] text-[#e9f5f7]">Matthew Thompson</T>
            <svg viewBox="0 0 10 7" className="ml-[8px] h-[7px] w-[10px]"><path d="M0 0h10L5 7z" fill="#fff" /></svg>
          </div>
          <div className="flex flex-col pl-[243px] text-[13.5px] leading-[15.33px] text-[#404345]">
            {paras.map((p, i) => (
              <div key={i} className={`mb-[13.4px] flex flex-col items-start ${p.indent ? "pl-[15px]" : ""}`}>
                {p.lines.map(([w, t], j) => <T key={j} w={w}>{t}</T>)}
              </div>
            ))}
            <T w={64} className="ml-[2px] mt-[25px] self-start text-[#6e7376] [text-shadow:0_0_0.5px_#6e7376]">Start Date</T>
            <T w={133} className="mt-[6px] self-start">Aug 24, 2016 6:30 PM</T>
            <T w={60} className="ml-[1px] mt-[24px] self-start text-[#6e7376] [text-shadow:0_0_0.5px_#6e7376]">Due Date</T>
            <T w={133} className="mt-[5px] self-start">Aug 31, 2016 6:30 PM</T>
          </div>
          {/* floating action bar */}
          <div className="absolute bottom-0 left-[230px] flex h-[60px] w-[1199px] items-start gap-[5px] rounded-t-[5px] border border-b-0 border-[#c4c4c4] bg-white/90 pl-[13px] pt-[12px] text-[13.5px] font-bold shadow-[0_0_3px_rgba(0,0,0,0.25)]">
            <div className="flex h-[35px] w-[75px] items-center justify-center rounded-[4px] border border-[#006f8b] bg-gradient-to-b from-[#3093ad] to-[#007896] pb-[3px] text-[#e7f4f7]"><T w={47}>Submit</T></div>
            <div className="flex h-[35px] w-[72px] items-center justify-center rounded-[4px] border border-[#ccc] bg-gradient-to-b from-[#fdfdfd] to-[#f1f1f1] pb-[3px] text-[#3a3d3f]"><T w={46}>Cancel</T></div>
          </div>
        </div>
        <div className="flex w-[21px] flex-col items-center bg-[#f1f1f1] pt-[9px]">
          <svg viewBox="0 0 10 6" className="h-[5px] w-[9px]"><path d="M0 6h10L5 0z" fill="#505050" /></svg>
          <div className="mt-[175px] h-[419px] w-[17px] bg-[#c1c1c1]" />
          <svg viewBox="0 0 10 6" className="mb-[8px] mt-auto h-[5px] w-[9px]"><path d="M0 0h10L5 6z" fill="#505050" /></svg>
        </div>
      </div>
    </div>
  );
}

export default function App() {
  return (
    <div className="flex h-[1080px] w-[3600px] overflow-hidden bg-black leading-normal">
      <Desktop />
      <div className="flex w-[1680px] shrink-0 flex-col">
        <Chrome />
        <div className="h-[38px] bg-[#02050a]"><Taskbar big /></div>
      </div>
    </div>
  );
}
